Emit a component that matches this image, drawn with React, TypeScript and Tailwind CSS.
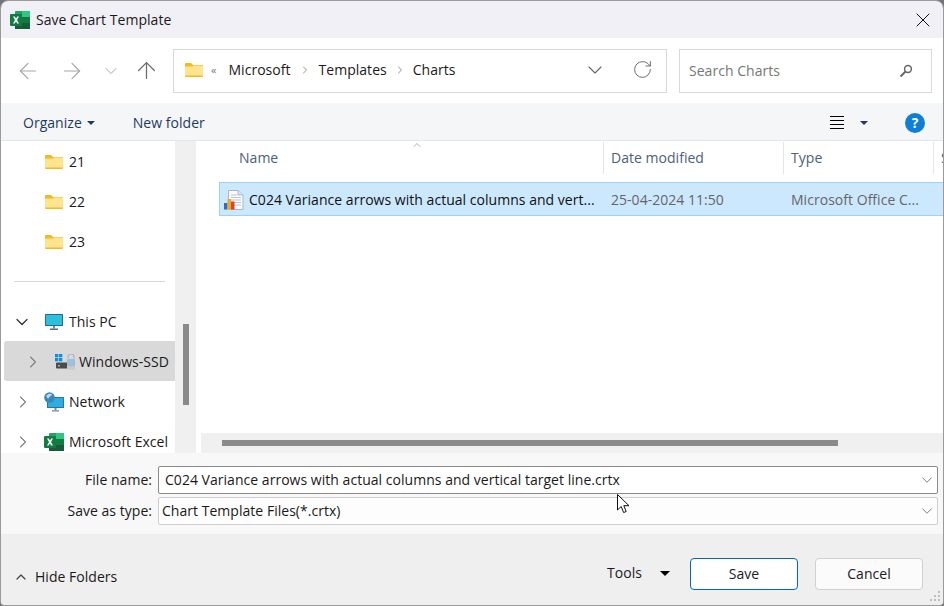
import type { ReactNode } from 'react';
import { ChevronDown, ChevronRight, ChevronUp, ArrowLeft, ArrowRight, ArrowUp, RotateCw, X } from 'lucide-react';

function FolderIcon({ className = '' }: { className?: string }) {
  return (
    <svg viewBox="0 0 18 14" className={`h-[14px] w-[18px] shrink-0 ${className}`}>
      <path d="M0 1a1 1 0 0 1 1-1h5l2 2h9a1 1 0 0 1 1 1v10a1 1 0 0 1-1 1H1a1 1 0 0 1-1-1z" fill="#f6b81f" />
      <path d="M0 3.500h7.500L9 2.500h8a1 1 0 0 1 1 1V12.600H0z" fill="#ffe48f" />
    </svg>
  );
}

function ExcelIcon({ className = '' }: { className?: string }) {
  return (
    <svg viewBox="0 0 20 18" className={`h-[18px] w-[20px] shrink-0 ${className}`}>
      <rect x="5" y="0" width="15" height="18" rx="1" fill="#21a366" />
      <rect x="12" y="0" width="8" height="6" fill="#33c481" />
      <rect x="5" y="12" width="15" height="6" fill="#185c37" />
      <rect x="12" y="6" width="8" height="6" fill="#107c41" />
      <rect x="0" y="3" width="12" height="12" rx="1" fill="#107c41" />
      <path d="M3 5.500h1.900L6 7.800l1.200-2.300H9L7 9l2 3.500H7.100L6 10.200 4.800 12.500H3L5 9z" fill="#fff" />
    </svg>
  );
}

function MonitorIcon({ className = '' }: { className?: string }) {
  return (
    <svg viewBox="0 0 18 16" className={`h-4 w-[18px] shrink-0 ${className}`}>
      <rect x="0" y="0" width="18" height="12" rx="0.500" fill="#1e6f93" />
      <rect x="1" y="1" width="16" height="10" fill="#2cc0dc" />
      <rect x="8" y="12" width="2" height="2.500" fill="#7f8a92" />
      <rect x="5" y="14.500" width="8" height="1.500" fill="#5f6a72" />
    </svg>
  );
}

function DriveIcon({ className = '' }: { className?: string }) {
  return (
    <svg viewBox="0 0 20 16" className={`h-4 w-5 shrink-0 ${className}`}>
      <g fill="#0f8ee0">
        <rect x="0" y="0" width="3.300" height="3.300" />
        <rect x="4" y="0" width="3.300" height="3.300" />
        <rect x="0" y="4" width="3.300" height="3.300" />
        <rect x="4" y="4" width="3.300" height="3.300" />
      </g>
      <rect x="1" y="8.500" width="18" height="6" rx="1" fill="#4c4c4c" />
      <rect x="3" y="11" width="2" height="1.500" fill="#7fd06f" />
      <path d="M13 4.500V3a3 3 0 0 1 6 0v1.500" fill="none" stroke="#a9b4bf" strokeWidth="1.200" />
      <rect x="12" y="5" width="8" height="8" rx="0.800" fill="#9fc0dc" />
      <rect x="12" y="12" width="8" height="3.500" fill="#c9c9c9" />
    </svg>
  );
}

function NetworkIcon({ className = '' }: { className?: string }) {
  return (
    <svg viewBox="0 0 20 20" className={`h-5 w-5 shrink-0 ${className}`}>
      <rect x="3" y="5" width="17" height="11" rx="0.500" fill="#1e78a8" />
      <rect x="4" y="6" width="15" height="9" fill="#2eaee0" />
      <rect x="10.500" y="16" width="2" height="2.200" fill="#7f8a92" />
      <rect x="8" y="18.200" width="7" height="1.300" fill="#7f8a92" />
      <circle cx="5.500" cy="5.500" r="5.300" fill="#3a86b8" />
      <path d="M2.500 3.500C4 1.500 7 1.500 8.200 2.500 7.500 4 5 4.500 4.500 6.500 3 6.500 2.200 5 2.500 3.500z" fill="#b9dcf0" />
    </svg>
  );
}

function ChartFileIcon({ className = '' }: { className?: string }) {
  return (
    <svg viewBox="0 0 20 20" className={`h-5 w-5 shrink-0 ${className}`}>
      <path d="M4.500 0.500h9.500l5 4.500v14.500h-14.500z" fill="#fbfcfe" stroke="#a9b7c9" />
      <path d="M14 0.500v4.500h5" fill="#dce6f2" stroke="#a9b7c9" />
      <path d="M7 5h6M7 7.500h10M7 10h10M10 12.500h7M10 15h7" stroke="#b5c4d6" />
      <rect x="0" y="13" width="3.500" height="6.500" fill="#3569c8" />
      <rect x="3.500" y="9" width="3.500" height="10.500" fill="#f0a81e" />
      <rect x="7" y="11.500" width="3.500" height="8" fill="#d8432e" />
    </svg>
  );
}

function Caret({ className = '' }: { className?: string }) {
  return (
    <svg viewBox="0 0 8 4" className={`h-1 w-2 shrink-0 ${className}`}>
      <path d="M0 0h8L4 4z" fill="currentColor" />
    </svg>
  );
}

type TreeRow = { label: string; rowClass: string; icon: ReactNode; textClass: string; chevron?: 'open' | 'closed' };

const topFolders: TreeRow[] = [
  { label: '21', rowClass: 'pl-[44px]', icon: <FolderIcon />, textClass: 'ml-[6px]' },
  { label: '22', rowClass: 'pl-[44px]', icon: <FolderIcon />, textClass: 'ml-[6px]' },
  { label: '23', rowClass: 'pl-[44px]', icon: <FolderIcon />, textClass: 'ml-[6px]' },
];

const places: TreeRow[] = [
  { label: 'This PC', rowClass: 'pl-[11px]', icon: <MonitorIcon className="ml-[13px]" />, textClass: 'ml-[6px]', chevron: 'open' },
  { label: 'Windows-SSD', rowClass: 'ml-[3px] rounded-l-[3px] bg-[#d9d9d9] pl-[19px]', icon: <DriveIcon className="ml-3" />, textClass: 'ml-1', chevron: 'closed' },
  { label: 'Network', rowClass: 'pl-3', icon: <NetworkIcon className="ml-[11px]" />, textClass: 'ml-[5px]', chevron: 'closed' },
  { label: 'Microsoft Excel', rowClass: 'pl-3', icon: <ExcelIcon className="ml-[11px]" />, textClass: 'ml-[5px]', chevron: 'closed' },
];

function Tree({ row }: { row: TreeRow }) {
  return (
    <div className={`flex h-10 shrink-0 items-center whitespace-nowrap pt-px ${row.rowClass}`}>
      {row.chevron === 'open' && <ChevronDown size={20} strokeWidth={1.5} className="text-[#333]" />}
      {row.chevron === 'closed' && <ChevronRight size={20} strokeWidth={1.3} className="text-[#808080]" />}
      {row.icon}
      <span className={row.textClass}>{row.label}</span>
    </div>
  );
}

export default function App() {
  return (
    <div className="h-[606px] w-[944px] overflow-hidden bg-[#6f7478] text-[14px] leading-5 tracking-[0.03px] text-[#1a1a1a] [font-family:'Open_Sans',sans-serif]">
      <div className="relative flex h-full flex-col overflow-hidden rounded-t-lg rounded-b-sm border border-[#9a9a9a]">
        {/* Title bar */}
        <div className="flex h-[37px] shrink-0 items-center bg-[#f0f0f6] pl-[9px] pr-2">
          <ExcelIcon />
          <span className="ml-[6px]">Save Chart Template</span>
          <X size={24} strokeWidth={1} className="ml-auto text-[#111]" />
        </div>

        {/* Address row */}
        <div className="flex h-[65px] shrink-0 items-center bg-white pl-[14px] pr-[11px]">
          <ArrowLeft size={26} strokeWidth={1.1} className="text-[#a6a6a6]" />
          <ArrowRight size={26} strokeWidth={1.1} className="ml-[18px] text-[#a6a6a6]" />
          <ChevronDown size={20} strokeWidth={1.2} className="ml-4 text-[#a6a6a6]" />
          <ArrowUp size={27} strokeWidth={1.1} className="ml-3 text-[#6b6b6b]" />
          <div className="ml-[13px] flex h-11 w-[494px] items-center border border-[#d9d9d9] pb-[2px] pl-[11px] pr-[13px]">
            <FolderIcon />
            <span className="ml-2 text-[11px] text-[#777]">«</span>
            <span className="ml-3">Microsoft</span>
            <ChevronRight size={12} strokeWidth={1.6} className="mx-2 text-[#777]" />
            <span>Templates</span>
            <ChevronRight size={12} strokeWidth={1.6} className="mx-[7px] text-[#777]" />
            <span>Charts</span>
            <ChevronDown size={24} strokeWidth={1.1} className="ml-auto text-[#666]" />
            <RotateCw size={21} strokeWidth={1.1} className="ml-[25px] text-[#666]" />
          </div>
          <div className="ml-3 flex h-11 w-[253px] items-center border border-[#d9d9d9] pl-[9px] pr-[18px] text-[#767676]">
            <span>Search Charts</span>
            <svg viewBox="0 0 14 14" className="ml-auto h-[14px] w-[14px]">
              <circle cx="9" cy="5" r="3.400" fill="none" stroke="#666" strokeWidth="1.500" />
              <path d="M6.500 7.500L1.500 12.500" stroke="#666" strokeWidth="2" />
            </svg>
          </div>
        </div>

        {/* Toolbar */}
        <div className="flex h-[38px] shrink-0 items-center border-b border-[#e6e6e6] bg-[#f5f6f7] pl-[22px] pr-[18px] pt-[2px] text-[#1e3a5f]">
          <span>Organize</span>
          <Caret className="ml-[5px] text-[#1e3a5f]" />
          <span className="ml-[38px]">New folder</span>
          <div className="ml-auto flex h-5 w-[14px] flex-col justify-center gap-[3px]">
            <div className="h-px bg-black" />
            <div className="h-px bg-black" />
            <div className="h-px bg-black" />
            <div className="h-px bg-black" />
          </div>
          <Caret className="ml-4 text-[#1e3a5f]" />
          <div className="ml-[37px] flex h-5 w-5 items-center justify-center rounded-full bg-[#0f7fd6] text-[14px] font-bold text-white">?</div>
        </div>

        {/* Main panes */}
        <div className="flex h-[312px] shrink-0 overflow-hidden bg-white">
          <div className="flex w-[174px] shrink-0 flex-col overflow-hidden">
            {topFolders.map(r => <Tree key={r.label} row={r} />)}
            <div className="flex h-10 shrink-0 items-center pl-[13px] pr-[10px]">
              <div className="h-px w-full bg-[#d9d9d9]" />
            </div>
            {places.map(r => <Tree key={r.label} row={r} />)}
          </div>
          <div className="flex w-[21px] shrink-0 justify-end bg-[#f0f0f0] pr-[7px] pt-[183px]">
            <div className="h-[81px] w-[6px] bg-[#8a8a8a]" />
          </div>
          <div className="flex min-w-0 flex-1 flex-col">
            <div className="relative flex h-[33px] shrink-0 whitespace-nowrap pt-px text-[#4c607a]">
              <ChevronUp size={12} strokeWidth={1.2} className="absolute left-[215px] -top-[2px] text-[#777]" />
              <div className="flex w-[408px] shrink-0 items-center border-r border-[#e5e5e5] pl-[43px]">Name</div>
              <div className="flex w-[180px] shrink-0 items-center border-r border-[#e5e5e5] pl-[7px]">Date modified</div>
              <div className="flex w-[150px] shrink-0 items-center border-r border-[#e5e5e5] pl-[7px]">Type</div>
              <div className="flex flex-1 items-center overflow-hidden pl-[7px]">S</div>
            </div>
            <div className="-mr-px ml-[23px] mt-2 flex h-[34px] shrink-0 items-center whitespace-nowrap border border-[#99d1ff] bg-[#cce8ff] pl-1 pt-px">
              <ChartFileIcon />
              <span className="ml-[5px] w-[362px] shrink-0 text-[#111]">C024 Variance arrows with actual columns and vert...</span>
              <span className="w-[180px] shrink-0 text-[#666]">25-04-2024 11:50</span>
              <span className="text-[#666]">Microsoft Office C...</span>
            </div>
            <div className="flex-1" />
            <div className="ml-[5px] flex h-5 shrink-0 items-center bg-[#f0f0f0] pl-[21px]">
              <div className="h-[6px] w-[616px] bg-[#8a8a8a]" />
            </div>
          </div>
        </div>

        {/* File form */}
        <div className="flex h-[81px] shrink-0 flex-col gap-[3px] bg-[#f8f8f8] px-[5px] pt-[13px]">
          <div className="flex items-center">
            <label className="w-[146px] text-right">File name:</label>
            <div className="ml-[6px] flex h-7 flex-1 items-center rounded-[2px] border border-[#8a8a8a] bg-white pl-[6px] pr-px">
              <span className="whitespace-nowrap">C024 Variance arrows with actual columns and vertical target line.crtx</span>
              <ChevronDown size={18} strokeWidth={1} className="ml-auto text-[#555]" />
            </div>
          </div>
          <div className="flex items-center">
            <label className="w-[146px] text-right">Save as type:</label>
            <div className="ml-[6px] flex h-7 flex-1 items-center rounded-[2px] border border-[#cfcfcf] bg-[#fdfdfd] pl-[3px] pr-px">
              <span>Chart Template Files(*.crtx)</span>
              <ChevronDown size={18} strokeWidth={1} className="ml-auto text-[#555]" />
            </div>
          </div>
        </div>

        {/* Footer */}
        <div className="flex min-h-0 flex-1 items-start bg-[#efefef] pl-[12px] pr-5 pt-6">
          <ChevronUp size={16} strokeWidth={1.8} className="mt-[11px] text-[#444]" />
          <span className="ml-[6px] mt-[9px]">Hide Folders</span>
          <span className="ml-auto mt-[5px]">Tools</span>
          <Caret className="ml-[18px] mt-[13px] h-[5px] w-[10px] text-black" />
          <button className="ml-5 h-8 w-[108px] rounded-[4px] border border-[#0067c0] bg-white">Save</button>
          <button className="ml-[17px] h-8 w-[108px] rounded-[4px] border border-[#d0d0d0] bg-[#fbfbfb]">Cancel</button>
        </div>

        {/* Resize grip */}
        <svg viewBox="0 0 12 12" className="absolute bottom-[2px] right-[1px] h-3 w-3">
          <g fill="#bdbdbd">
            <rect x="8" y="0" width="2" height="2" />
            <rect x="4" y="4" width="2" height="2" />
            <rect x="8" y="4" width="2" height="2" />
            <rect x="0" y="8" width="2" height="2" />
            <rect x="4" y="8" width="2" height="2" />
            <rect x="8" y="8" width="2" height="2" />
          </g>
        </svg>

        {/* Mouse pointer */}
        <svg viewBox="0 0 13 20" className="absolute left-[616px] top-[493px] h-5 w-[13px]">
          <path d="M0.500 0.500V16l3.700-3.500 2.400 6 2.600-1-2.400-5.800h5.200z" fill="#fff" stroke="#111" />
        </svg>
      </div>
    </div>
  );
}
